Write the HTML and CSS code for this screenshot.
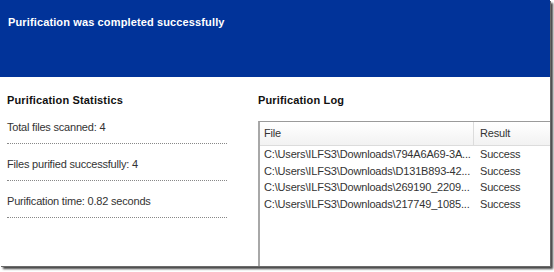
FILE: index.html
```html
<!DOCTYPE html>
<html lang="en">
<head>
    <meta charset="UTF-8">
    <title>Purification</title>
    <link rel="stylesheet" href="styles.css">
</head>
<body>
    <div class="window">
        <div class="banner">Purification was completed successfully</div>
        <div class="content">
            <div class="stats">
                <h2>Purification Statistics</h2>
                <div class="stat">Total files scanned: 4</div>
                <div class="stat">Files purified successfully: 4</div>
                <div class="stat">Purification time: 0.82 seconds</div>
            </div>
            <div class="log">
                <h2>Purification Log</h2>
                <div class="list">
                    <div class="list-head">
                        <div class="col-file">File</div>
                        <div class="col-result">Result</div>
                    </div>
                    <div class="row">
                        <div class="col-file">C:\Users\ILFS3\Downloads\794A6A69-3A...</div>
                        <div class="col-result">Success</div>
                    </div>
                    <div class="row">
                        <div class="col-file">C:\Users\ILFS3\Downloads\D131B893-42...</div>
                        <div class="col-result">Success</div>
                    </div>
                    <div class="row">
                        <div class="col-file">C:\Users\ILFS3\Downloads\269190_2209...</div>
                        <div class="col-result">Success</div>
                    </div>
                    <div class="row">
                        <div class="col-file">C:\Users\ILFS3\Downloads\217749_1085...</div>
                        <div class="col-result">Success</div>
                    </div>
                </div>
            </div>
        </div>
    </div>
</body>
</html>
```

FILE: styles.css
```css
html, body {
    height: 272px;
}
body {
    margin: 0;
    background: #ffffff;
    font-family: "Liberation Sans", Arial, sans-serif;
    font-size: 11px;
    line-height: 13px;
    color: #222;
}
.window {
    width: 550px;
    height: 266px;
    background: #fff;
    box-shadow: 1px 1px 0 #6a6a6a, 3px 3px 2px #444;
    overflow: hidden;
    display: flex;
    flex-direction: column;
}
.banner {
    height: 77px;
    box-sizing: border-box;
    background: #013399;
    color: #fff;
    font-weight: bold;
    letter-spacing: 0.13px;
    padding: 16px 0 0 8px;
}
.content {
    flex: 1;
    display: flex;
}
.stats {
    width: 258px;
    padding-left: 7px;
    box-sizing: border-box;
}
h2 {
    font-size: 11px;
    font-weight: bold;
    letter-spacing: 0.15px;
    margin: 0;
    padding-top: 17px;
    color: #111;
}
.stat {
    width: 220px;
    height: 37px;
    box-sizing: border-box;
    padding-top: 14px;
    border-bottom: 1px dotted #888;
    color: #333;
    letter-spacing: -0.2px;
}
.log {
    flex: 1;
    display: flex;
    flex-direction: column;
}
.log h2 {
    margin-bottom: 14px;
}
.list {
    flex: 1;
    border-top: 1px solid #9a9a9a;
    border-left: 2px solid #a8a8a8;
    margin-right: -10px;
}
.list-head {
    display: flex;
    height: 24px;
    box-sizing: border-box;
    line-height: 22px;
    background: linear-gradient(#ffffff, #f2f2f2);
    border-bottom: 1px solid #dcdcdc;
}
.list-head .col-file {
    border-right: 1px solid #dcdcdc;
}
.row {
    display: flex;
    height: 16.5px;
    line-height: 16.5px;
}
.col-file {
    width: 214px;
    padding-left: 4px;
    box-sizing: border-box;
    white-space: nowrap;
    color: #333;
    letter-spacing: -0.17px;
}
.col-result {
    padding-left: 6px;
    color: #333;
    letter-spacing: -0.17px;
}
```
